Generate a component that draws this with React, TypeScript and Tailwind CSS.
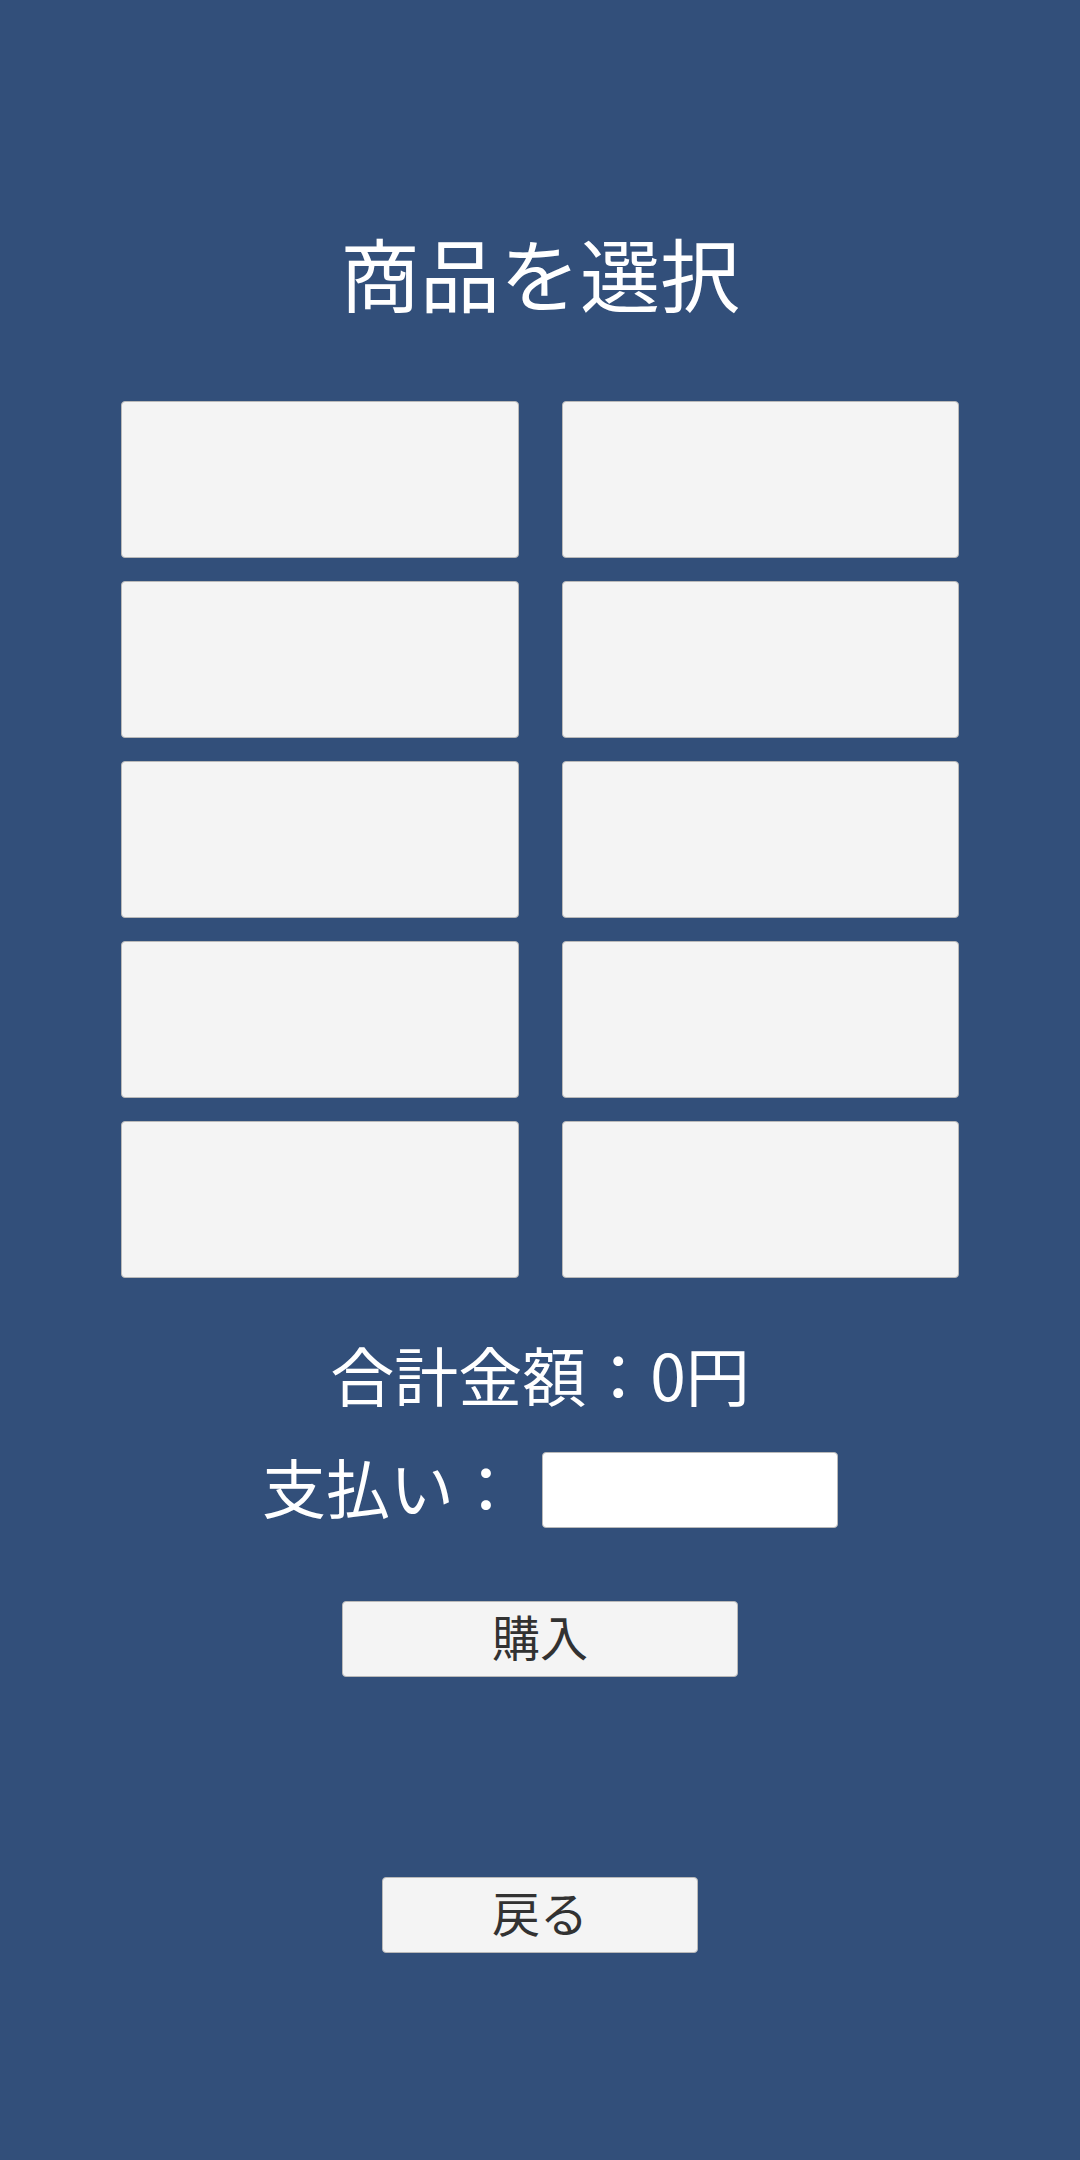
const products = Array.from({ length: 10 }, (_, i) => i);

const App = () => {
  return (
    <div className="min-h-[2160px] w-full bg-[#324f7a] flex flex-col items-center pt-[231px] font-['Noto_Sans_CJK_JP','Noto_Sans',sans-serif]">
      <h1 className="text-[80px] leading-[80px] text-white font-normal">商品を選択</h1>

      <div className="mt-[90px] w-[838px] grid grid-cols-2 gap-x-[43px] gap-y-[23px]">
        {products.map((p) => (
          <button
            key={p}
            className="h-[157px] bg-[#f4f4f4] border border-[#b9b9b9] rounded-[4px]"
          ></button>
        ))}
      </div>

      <p className="mt-[63px] text-[64px] leading-[64px] text-white">合計金額：0円</p>

      <div className="mt-[47px] w-full flex items-center h-[76px] pl-[262px]">
        <span className="text-[64px] leading-[64px] pb-[10px] text-white">支払い：</span>
        <input
          type="text"
          className="ml-[24px] w-[296px] h-[76px] bg-white border border-[#b9b9b9] rounded-[4px] outline-none"
        />
      </div>

      <button className="mt-[73px] w-[396px] h-[76px] pb-[8px] bg-[#f4f4f4] border border-[#b9b9b9] rounded-[4px] text-[48px] leading-none text-[#323232]">
        購入
      </button>

      <button className="mt-[200px] w-[316px] h-[76px] pb-[8px] bg-[#f4f4f4] border border-[#b9b9b9] rounded-[4px] text-[48px] leading-none text-[#323232]">
        戻る
      </button>
    </div>
  );
};

export default App;
